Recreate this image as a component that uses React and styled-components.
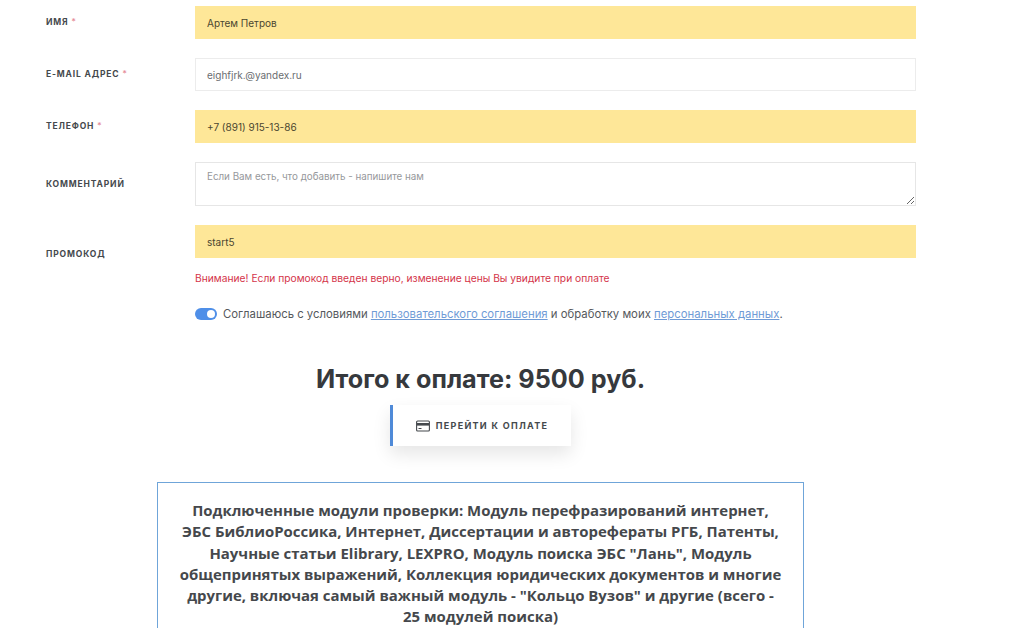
import React from 'react';
import styled, { createGlobalStyle } from 'styled-components';

const Global = createGlobalStyle`
html, body {
    margin: 0;
    padding: 0;
    background: #fff;
    height: 628px;
    overflow: hidden;
}
* {
    box-sizing: border-box;
}
body {
    font-family: "Inter", "Open Sans", "Liberation Sans", sans-serif;
    color: #383d42;
}
`

const Page = styled.div`
width: 1024px;
height: 628px;
overflow: hidden;
padding-top: 6px;
`

const Form = styled.form`
display: flex;
flex-direction: column;
gap: 19px;
padding-left: 46px;
`

const Row = styled.div`
display: flex;
align-items: ${props => props.$top ? 'flex-start' : 'center'};
`

const Label = styled.label`
width: 149px;
flex-shrink: 0;
font-size: 8.5px;
font-weight: 700;
letter-spacing: 0.85px;
text-transform: uppercase;
color: #45494d;
padding-top: ${props => props.$offset || 0}px;
padding-bottom: ${props => props.$offset ? 0 : 1}px;
`

const Star = styled.span`
color: #e58b96;
margin-left: 3px;
font-weight: 400;
`

const Input = styled.input`
display: block;
width: 721px;
height: 33px;
padding: 0 11px;
font-family: inherit;
font-size: 10px;
color: ${props => props.$filled ? '#4a4630' : '#6a6d70'};
background: ${props => props.$filled ? '#fee798' : '#fff'};
border: 1px solid ${props => props.$filled ? '#fee798' : '#ececec'};
outline: none;
`

const Textarea = styled.textarea`
display: block;
width: 721px;
height: 44px;
padding: 8px 11px;
font-family: inherit;
font-size: 9.8px;
border: 1px solid #e6e6e6;
outline: none;
resize: vertical;
&::placeholder {
    color: #96989b;
}
`

const PromoBlock = styled.div`
display: flex;
flex-direction: column;
`

const Warning = styled.div`
margin-top: 14px;
font-size: 10.25px;
line-height: 13px;
color: #d4344a;
`

const Agreement = styled.div`
display: flex;
align-items: center;
gap: 6px;
margin-top: 22px;
padding-left: 195px;
font-size: 11.35px;
color: #55585c;
`

const Toggle = styled.span`
position: relative;
display: block;
width: 22px;
height: 12px;
border-radius: 6px;
background: #4f8fe8;
&::after {
    content: '';
    position: absolute;
    top: 2px;
    right: 2px;
    width: 8px;
    height: 8px;
    border-radius: 50%;
    background: #fff;
}
`

const DocLink = styled.a`
color: #6f9bd6;
text-decoration: underline;
`

const Summary = styled.div`
display: flex;
flex-direction: column;
align-items: center;
width: 961px;
`

const Total = styled.h2`
margin: 42px 0 0;
font-size: 25.2px;
line-height: 32px;
font-weight: 700;
color: #36393d;
`

const PayButton = styled.button`
display: flex;
align-items: center;
justify-content: center;
gap: 6px;
width: 181px;
height: 41px;
margin-top: 10px;
padding: 0;
font-family: inherit;
font-size: 9px;
font-weight: 700;
letter-spacing: 1.3px;
color: #45494d;
background: #fff;
border: none;
border-left: 3px solid #4f8ad8;
box-shadow: 0 8px 18px rgba(0, 0, 0, 0.1);
`

const Modules = styled.div`
width: 647px;
margin: 36px 0 0 157px;
padding: 17px 10px 30px;
border: 1px solid #6fa5d9;
font-family: "Open Sans", sans-serif;
font-size: 14.95px;
line-height: 21.3px;
font-weight: 700;
text-align: center;
color: #45484c;
`

const CardIcon = () => (
    <svg width="14" height="12" viewBox="0 0 14 12" fill="none">
        <rect x="0.6" y="1" width="12.8" height="10" rx="1" stroke="#45494d" strokeWidth="1.1" />
        <rect x="1" y="3" width="12" height="2.6" fill="#45494d" />
        <rect x="2.5" y="8" width="3" height="1" fill="#45494d" />
    </svg>
)

const App = () => {
    return (
        <Page>
            <Global />
            <Form>
                <Row>
                    <Label>Имя<Star>*</Star></Label>
                    <Input $filled readOnly value="Артем Петров" />
                </Row>
                <Row>
                    <Label>E-mail адрес<Star>*</Star></Label>
                    <Input readOnly value="eighfjrk.@yandex.ru" />
                </Row>
                <Row>
                    <Label>Телефон<Star>*</Star></Label>
                    <Input $filled readOnly value="+7 (891) 915-13-86" />
                </Row>
                <Row>
                    <Label>Комментарий</Label>
                    <Textarea placeholder="Если Вам есть, что добавить - напишите нам" />
                </Row>
                <Row $top>
                    <Label $offset={24}>Промокод</Label>
                    <PromoBlock>
                        <Input $filled readOnly value="start5" />
                        <Warning>Внимание! Если промокод введен верно, изменение цены Вы увидите при оплате</Warning>
                    </PromoBlock>
                </Row>
            </Form>
            <Agreement>
                <Toggle />
                <span>
                    Соглашаюсь с условиями <DocLink href="#">пользовательского соглашения</DocLink> и обработку моих <DocLink href="#">персональных данных</DocLink>.
                </span>
            </Agreement>
            <Summary>
                <Total>Итого к оплате: 9500 руб.</Total>
                <PayButton type="button"><CardIcon />ПЕРЕЙТИ К ОПЛАТЕ</PayButton>
            </Summary>
            <Modules>
                Подключенные модули проверки: Модуль перефразирований интернет,<br />
                ЭБС БиблиоРоссика, Интернет, Диссертации и авторефераты РГБ, Патенты,<br />
                Научные статьи Elibrary, LEXPRO, Модуль поиска ЭБС "Лань", Модуль<br />
                общепринятых выражений, Коллекция юридических документов и многие<br />
                другие, включая самый важный модуль - "Кольцо Вузов" и другие (всего -<br />
                25 модулей поиска)
            </Modules>
        </Page>
    )
}

export default App
